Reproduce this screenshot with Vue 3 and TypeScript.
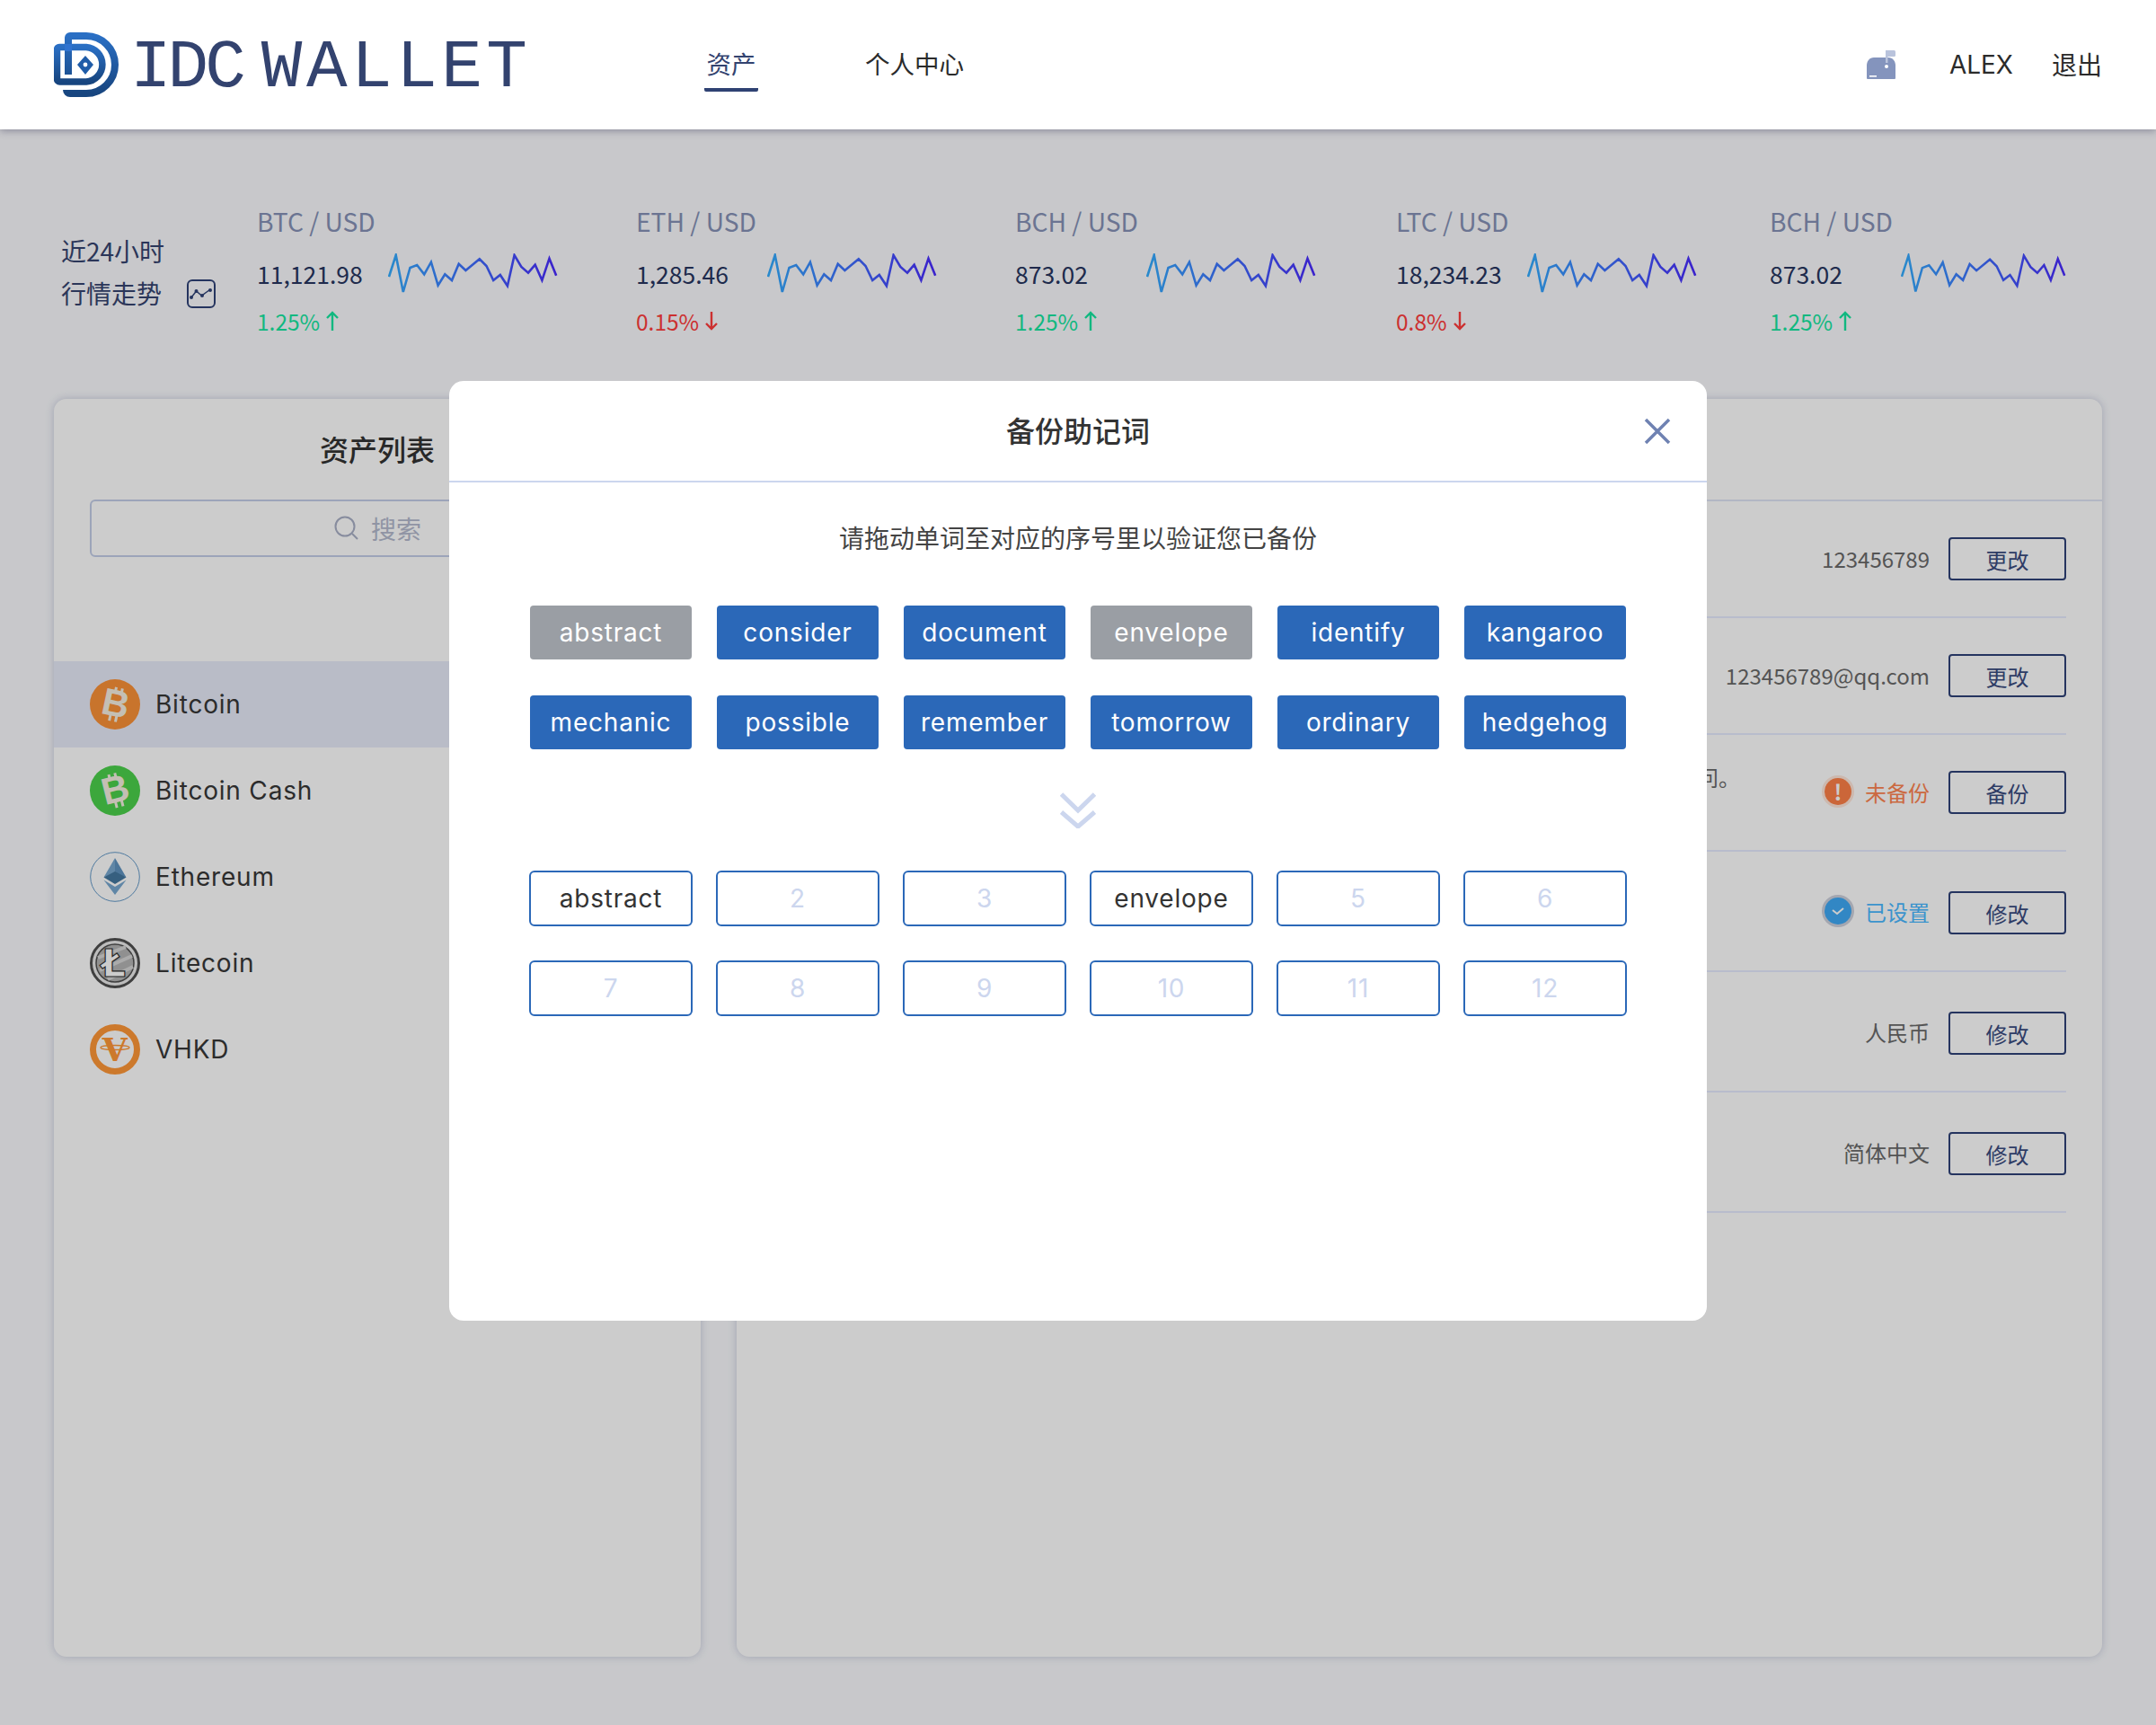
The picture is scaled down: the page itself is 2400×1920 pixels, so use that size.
<script setup lang="ts">
interface Tick { pair: string; price: string; change: string; up: boolean; width: number }
const ticks: Tick[] = [
  { pair: 'BTC / USD', price: '11,121.98', change: '1.25%', up: true, width: 422 },
  { pair: 'ETH / USD', price: '1,285.46', change: '0.15%', up: false, width: 422 },
  { pair: 'BCH / USD', price: '873.02', change: '1.25%', up: true, width: 424 },
  { pair: 'LTC / USD', price: '18,234.23', change: '0.8%', up: false, width: 416 },
  { pair: 'BCH / USD', price: '873.02', change: '1.25%', up: true, width: 330 },
]
const raw: [number, number][] = [[1003,262],[1023,190],[1044,313],[1064,232],[1084,223],[1105,254],[1125,213],[1145,291],[1165,254],[1185,274],[1205,219],[1225,241],[1265,203],[1285,226],[1305,274],[1325,256],[1346,293],[1366,190],[1386,229],[1406,249],[1426,222],[1446,274],[1467,201],[1487,258]]
const spark = raw.map(([x, y]) => `${((x - 1003) / 2.6 + 1).toFixed(1)},${((y - 190) / 3 + 2).toFixed(1)}`).join(' ')

const coins = ['Bitcoin', 'Bitcoin Cash', 'Ethereum', 'Litecoin', 'VHKD']
const words = [
  { t: 'abstract', used: true }, { t: 'consider', used: false }, { t: 'document', used: false },
  { t: 'envelope', used: true }, { t: 'identify', used: false }, { t: 'kangaroo', used: false },
  { t: 'mechanic', used: false }, { t: 'possible', used: false }, { t: 'remember', used: false },
  { t: 'tomorrow', used: false }, { t: 'ordinary', used: false }, { t: 'hedgehog', used: false },
]
const slots = ['abstract', '2', '3', 'envelope', '5', '6', '7', '8', '9', '10', '11', '12']

interface Row { value?: string; status?: 'warn' | 'ok'; statusText?: string; btn: string; desc?: string; tall: boolean }
const rows: Row[] = [
  { value: '123456789', btn: '更改', tall: false },
  { value: '123456789@qq.com', btn: '更改', tall: false },
  { status: 'warn', statusText: '未备份', btn: '备份', desc: '助记词可用于恢复钱包,请妥善保管,如有疑问请随时询问。', tall: false },
  { status: 'ok', statusText: '已设置', btn: '修改', tall: true },
  { value: '人民币', btn: '修改', tall: true },
  { value: '简体中文', btn: '修改', tall: true },
]
</script>

<template>
  <div class="page">
    <header class="topbar">
      <div class="logo">
        <svg class="logo-mark" width="72" height="72" viewBox="0 0 72 72" fill="none">
          <defs>
            <linearGradient id="lg" x1="0" y1="0" x2="0" y2="1">
              <stop offset="0" stop-color="#2a6fc4" />
              <stop offset="1" stop-color="#17457f" />
            </linearGradient>
          </defs>
          <path d="M16 47V6a2 2 0 0 1 2-2H36a32 32 0 0 1 0 64H18a4 4 0 0 1-4-4" stroke="url(#lg)" stroke-width="8" />
          <path d="M16 16.500H6a2.500 2.500 0 0 0-2.500 2.500V52a3 3 0 0 0 3 3H36a19.300 19.300 0 0 0 0-38.500H16" stroke="url(#lg)" stroke-width="7.500" />
          <rect x="12" y="13" width="8" height="8" fill="#2f73d0" />
          <path d="M35 26l9 10-9 11-9-11z" fill="#1f5ca8" />
          <circle cx="35" cy="36" r="2.400" fill="#fff" />
        </svg>
        <span class="logo-text"><span class="logo-a">IDC</span><span class="logo-b">WALLET</span></span>
      </div>
      <nav class="nav">
        <a class="nav-item active">资产</a>
        <a class="nav-item">个人中心</a>
      </nav>
      <div class="user">
        <svg width="32" height="32" viewBox="0 0 32 32">
          <path d="M0 31V17C0 12 3 8 8 8h16c5 0 8 4 8 9v14a1 1 0 0 1-1 1H1a1 1 0 0 1-1-1z" fill="#8494bd" />
          <rect x="21" y="0" width="11" height="7" rx="1.500" fill="#b9c3dc" />
          <rect x="21" y="0" width="2.500" height="14" fill="#b9c3dc" />
          <circle cx="22" cy="18" r="2" fill="#fff" />
          <rect x="3" y="28" width="8" height="1.600" fill="#fff" />
        </svg>
        <span class="alex">ALEX</span>
        <span class="logout">退出</span>
      </div>
    </header>

    <section class="ticker">
      <div class="ticker-label">
        <div>近24小时</div>
        <div class="ticker-label-2">
          行情走势
          <svg width="32" height="32" viewBox="0 0 32 32" fill="none">
            <rect x="1" y="1" width="30" height="30" rx="5" stroke="#2f4277" stroke-width="2" />
            <path d="M5 20l5.500-7 6 5 9-6.500" stroke="#2f4277" stroke-width="1.500" />
            <circle cx="5" cy="20" r="2" fill="#2f4277" /><circle cx="10.500" cy="13" r="2" fill="#2f4277" />
            <circle cx="17" cy="18" r="2" fill="#2f4277" /><circle cx="26" cy="12" r="2" fill="#2f4277" />
          </svg>
        </div>
      </div>
      <div v-for="(t, i) in ticks" :key="i" class="tick" :style="{ width: t.width + 'px' }">
        <div class="pair">{{ t.pair }}</div>
        <div class="price-row">
          <span class="price">{{ t.price }}</span>
          <svg class="spark" width="189" height="46" viewBox="0 0 189 46" fill="none">
            <polyline :points="spark" :stroke="`url(#sp${i})`" stroke-width="2.600" stroke-linejoin="miter" />
            <defs>
              <linearGradient :id="`sp${i}`" gradientUnits="userSpaceOnUse" x1="0" y1="0" x2="189" y2="0">
                <stop offset="0" stop-color="#34aeff" />
                <stop offset="1" stop-color="#4a2aff" />
              </linearGradient>
            </defs>
          </svg>
        </div>
        <div class="change" :class="t.up ? 'up' : 'down'">
          {{ t.change }}
          <svg width="16" height="23" viewBox="0 0 16 23" fill="none" stroke="currentColor" stroke-width="2.400">
            <path v-if="t.up" d="M8 22V2M2 8l6-6 6 6" />
            <path v-else d="M8 1v19M2 14l6 6 6-6" />
          </svg>
        </div>
      </div>
    </section>

    <main class="panels">
      <aside class="panel left">
        <h2 class="left-title">资产列表</h2>
        <div class="search">
          <svg width="30" height="30" viewBox="0 0 30 30" fill="none" stroke="#a9b0c6" stroke-width="2">
            <circle cx="13" cy="13" r="10.500" /><path d="M21 21l6 6" />
          </svg>
          <span>搜索</span>
        </div>
        <ul class="coins">
          <li v-for="(c, i) in coins" :key="c" class="coin" :class="{ active: i === 0 }">
            <svg width="56" height="56" viewBox="0 0 56 56" class="coin-icon">
              <template v-if="i === 0">
                <circle cx="28" cy="28" r="28" fill="#fb9137" />
                <g transform="rotate(12 28 28)" fill="#f5efe2">
                  <text x="29" y="41" text-anchor="middle" class="coin-b">B</text>
                  <rect x="24" y="9" width="3" height="7" /><rect x="31" y="9" width="3" height="7" />
                  <rect x="24" y="40" width="3" height="7" /><rect x="31" y="40" width="3" height="7" />
                </g>
              </template>
              <template v-else-if="i === 1">
                <circle cx="28" cy="28" r="28" fill="#4cd14b" />
                <g transform="rotate(-14 28 28)" fill="#f5efe2">
                  <text x="29" y="41" text-anchor="middle" class="coin-b">B</text>
                  <rect x="24" y="9" width="3" height="7" /><rect x="31" y="9" width="3" height="7" />
                  <rect x="24" y="40" width="3" height="7" /><rect x="31" y="40" width="3" height="7" />
                </g>
              </template>
              <template v-else-if="i === 2">
                <circle cx="28" cy="28" r="27.300" fill="none" stroke="#6399c8" stroke-width="1" />
                <path d="M28 7L15.500 28.500 28 24z" fill="#78a8d0" /><path d="M28 7L40.500 28.500 28 24z" fill="#5f93c0" />
                <path d="M15.500 28.500L28 36l12.500-7.500L28 22z" fill="#44779f" />
                <path d="M15.500 31.500L28 48l12.500-16.500L28 39z" fill="#78a8d0" />
              </template>
              <template v-else-if="i === 3">
                <circle cx="28" cy="28" r="26.500" fill="#ececec" stroke="#4f4f4f" stroke-width="3" />
                <circle cx="28" cy="28" r="21" fill="#b5b5b5" stroke="#4f4f4f" stroke-width="1.500" />
                <path d="M9 22L40 10M11 36L47 20M20 46L48 32" stroke="#d6d6d6" stroke-width="4" />
                <text x="27" y="43" text-anchor="middle" class="coin-l">Ł</text>
              </template>
              <template v-else>
                <circle cx="28" cy="28" r="24.500" fill="#fff" stroke="#ff9838" stroke-width="7" />
                <text x="28" y="41" text-anchor="middle" class="coin-v">V</text>
                <ellipse cx="28" cy="26" rx="16" ry="2.500" fill="none" stroke="#ff9838" stroke-width="1.300" />
              </template>
            </svg>
            <span>{{ c }}</span>
          </li>
        </ul>
      </aside>

      <section class="panel right">
        <div class="right-head"></div>
        <div class="rows">
          <div v-for="(r, i) in rows" :key="i" class="row" :class="{ tall: r.tall }">
            <span v-if="r.desc" class="desc">{{ r.desc }}</span>
            <span v-if="r.status" class="status" :class="r.status">
              <span class="status-dot">
                <svg v-if="r.status === 'ok'" width="16" height="12" viewBox="0 0 16 12" fill="none" stroke="#fff" stroke-width="2"><path d="M2 5l5 4 7-6" /></svg>
                <span v-else class="bang">!</span>
              </span>
              {{ r.statusText }}
            </span>
            <span v-else class="value">{{ r.value }}</span>
            <button class="btn">{{ r.btn }}</button>
          </div>
        </div>
      </section>
    </main>

    <div class="overlay"></div>

    <div class="modal">
      <div class="modal-head">
        <h3>备份助记词</h3>
        <svg class="close" width="30" height="30" viewBox="0 0 30 30" fill="none" stroke="#6f82b2" stroke-width="3.500">
          <path d="M2 2l26 26M28 2L2 28" />
        </svg>
      </div>
      <p class="hint">请拖动单词至对应的序号里以验证您已备份</p>
      <div class="grid words">
        <div v-for="w in words" :key="w.t" class="word" :class="{ used: w.used }">{{ w.t }}</div>
      </div>
      <svg class="chevrons" width="40" height="40" viewBox="0 0 40 40" fill="none" stroke="#ccd6ee" stroke-width="5">
        <path d="M1.500 2L20 20 38.500 2M1.500 22L20 38 38.500 22" />
      </svg>
      <div class="grid slots">
        <div v-for="s in slots" :key="s" class="slot" :class="{ filled: s.length > 2 }">{{ s }}</div>
      </div>
    </div>
  </div>
</template>

<style>
html, body { margin: 0; background: #fafbfe; }
</style>

<style scoped>
.page {
  position: relative;
  width: 2400px;
  height: 1920px;
  overflow: hidden;
  background: #fafbfe;
  font-family: "Noto Sans CJK SC", "Noto Sans", sans-serif;
}
.topbar {
  position: relative;
  z-index: 3;
  height: 144px;
  background: #fff;
  box-shadow: 0 2px 8px rgba(70, 72, 100, 0.45);
  display: flex;
  align-items: center;
  padding: 0 60px;
  box-sizing: border-box;
}
.logo { display: flex; align-items: center; width: 724px; }
.logo-mark { flex: none; }
.logo-text {
  margin-left: 13px;
  padding-top: 7px;
  font-family: "Liberation Mono", monospace;
  font-size: 76px;
  line-height: 72px;
  color: #33436f;
  white-space: nowrap;
  display: flex;
}
.logo-a { letter-spacing: -4px; }
.logo-b { margin-left: 21px; letter-spacing: 4.500px; }
.nav { display: flex; align-items: flex-start; gap: 119px; height: 144px; }
.nav-item {
  display: block;
  padding-top: 47px;
  font-size: 27.500px;
  line-height: 46px;
  color: #2b2b2b;
  height: 53px;
}
.nav-item.active {
  width: 60px;
  height: 51px;
  text-align: center;
  border-bottom: 4px solid #2f4273;
  border-radius: 0 0 2px 2px;
  white-space: nowrap;
  color: #33436f;
}
.user { margin-left: auto; display: flex; align-items: center; }
.alex {
  margin-left: 60px;
  font-family: Inter, sans-serif;
  font-size: 28px;
  color: #2b2b2b;
}
.logout { margin-left: 43px; font-size: 28px; line-height: 40px; padding-bottom: 2px; color: #2b2b2b; }

.ticker {
  display: flex;
  height: 300px;
  box-sizing: border-box;
  padding: 76px 0 0 68px;
}
.ticker-label { width: 218px; color: #364470; font-size: 28px; line-height: 47px; padding-top: 36px; }
.ticker-label-2 { display: flex; align-items: center; gap: 28px; }
.tick { flex: none; }
.pair { font-size: 28.200px; line-height: 52px; color: #8692b7; }
.price-row { display: flex; align-items: center; height: 60px; padding-top: 2px; box-sizing: content-box; }
.price { width: 146px; font-size: 26.500px; color: #273560; flex: none; }
.spark { margin-top: 1px; }
.change { display: flex; align-items: center; gap: 6px; height: 46px; font-size: 24.500px; }
.change.up { color: #16e7a1; }
.change.down { color: #ff3c3c; }

.panels { display: flex; gap: 40px; padding: 0 60px; }
.panel {
  background: #fff;
  height: 1400px;
  border-radius: 14px;
  box-shadow: 0 0 10px rgba(90, 100, 150, 0.3);
  box-sizing: border-box;
}
.left { width: 720px; flex: none; }
.left-title {
  margin: 0;
  padding-top: 33px;
  text-align: center;
  font-size: 32px;
  line-height: 44px;
  font-weight: 500;
  color: #333;
}
.search {
  margin: 35px 40px 0;
  height: 64px;
  box-sizing: border-box;
  border: 2px solid #c3cee8;
  border-radius: 6px;
  display: flex;
  align-items: center;
  justify-content: center;
  gap: 12px;
  font-size: 28px;
  color: #b4bace;
}
.coins { list-style: none; margin: 116px 0 0; padding: 0; }
.coin {
  display: flex;
  align-items: center;
  height: 96px;
  padding-left: 40px;
  gap: 17px;
  font-family: Inter, sans-serif;
  font-size: 28px;
  letter-spacing: 0.800px;
  color: #373737;
}
.coin.active { background: #e8ebf9; }
.coin-icon { flex: none; }
.coin-b { font: 700 42px "Liberation Sans", sans-serif; fill: #f5efe2; }
.coin-l { font: 700 42px "DejaVu Sans", sans-serif; fill: #fff; stroke: #333; stroke-width: 1.200px; }
.coin-v { font: 700 36px "DejaVu Serif", serif; fill: #ff9838; }

.right { flex: 1; }
.right-head { height: 112px; border-bottom: 2px solid #dfe5f6; }
.rows { padding: 0 40px; }
.row {
  display: flex;
  align-items: center;
  justify-content: flex-end;
  box-sizing: border-box;
  height: 130px;
  border-bottom: 2px solid #e6ecff;
  font-size: 24px;
  color: #6a6a6a;
  position: relative;
}
.row.tall { height: 134px; padding-top: 4px; }
.row .value, .row .status { margin-bottom: 2px; }
.row.tall .value, .row.tall .status { margin-bottom: 4px; }
.desc {
  position: absolute;
  right: 363px;
  top: 29px;
  white-space: nowrap;
  color: #6a6a6a;
}
.value { margin-right: 21px; }
.status { display: flex; align-items: center; gap: 15px; margin-right: 21px; }
.status.warn { color: #fe8450; }
.status.ok { color: #4ab8ff; }
.status-dot {
  width: 30px;
  height: 30px;
  border-radius: 50%;
  display: flex;
  align-items: center;
  justify-content: center;
}
.warn .status-dot { background: #fe8048; box-shadow: 0 0 0 3px rgba(254, 128, 72, 0.2); }
.ok .status-dot { background: #3fa9f5; box-shadow: 0 0 0 3px rgba(130, 140, 170, 0.4); }
.bang { color: #fff; font-weight: 700; font-size: 24px; line-height: 30px; }
.btn {
  width: 131px;
  height: 48px;
  padding: 0;
  background: transparent;
  border: 2px solid #2f4277;
  border-radius: 4px;
  font: 24px "Noto Sans CJK SC", sans-serif;
  color: #3a4c7f;
}

.overlay {
  position: absolute;
  inset: 0;
  z-index: 2;
  background: rgba(0, 0, 0, 0.2);
}
.modal {
  position: absolute;
  z-index: 4;
  left: 500px;
  top: 424px;
  width: 1400px;
  height: 1046px;
  background: #fff;
  border-radius: 16px;
  box-sizing: border-box;
  text-align: center;
}
.modal-head {
  height: 113px;
  box-sizing: border-box;
  border-bottom: 2px solid #ccd6ee;
  position: relative;
  display: flex;
  align-items: center;
  justify-content: center;
  padding-bottom: 4px;
}
.modal-head h3 { margin: 0; font-size: 32px; font-weight: 500; color: #333; }
.close { position: absolute; right: 40px; top: 41px; }
.hint { margin: 40px 0 0; font-size: 28px; line-height: 42px; color: #444; }
.grid { display: grid; grid-template-columns: repeat(6, 180px); column-gap: 28px; padding: 0 90px; }
.words { margin-top: 55px; row-gap: 40px; }
.word, .slot {
  display: flex;
  align-items: center;
  justify-content: center;
  font-family: Inter, sans-serif;
  font-size: 28px;
  letter-spacing: 0.800px;
  border-radius: 4px;
  box-sizing: border-box;
}
.word { height: 60px; background: #2b68b8; color: #fff; }
.word.used { background: #9a9ea4; }
.chevrons { display: block; margin: 48px auto 47px; }
.slots { row-gap: 38px; }
.slot {
  height: 62px;
  width: 182px;
  margin-left: -1px;
  border: 2px solid #2b68b8;
  border-radius: 6px;
  color: #ccd6ee;
}
.slot.filled { color: #333; }
</style>
